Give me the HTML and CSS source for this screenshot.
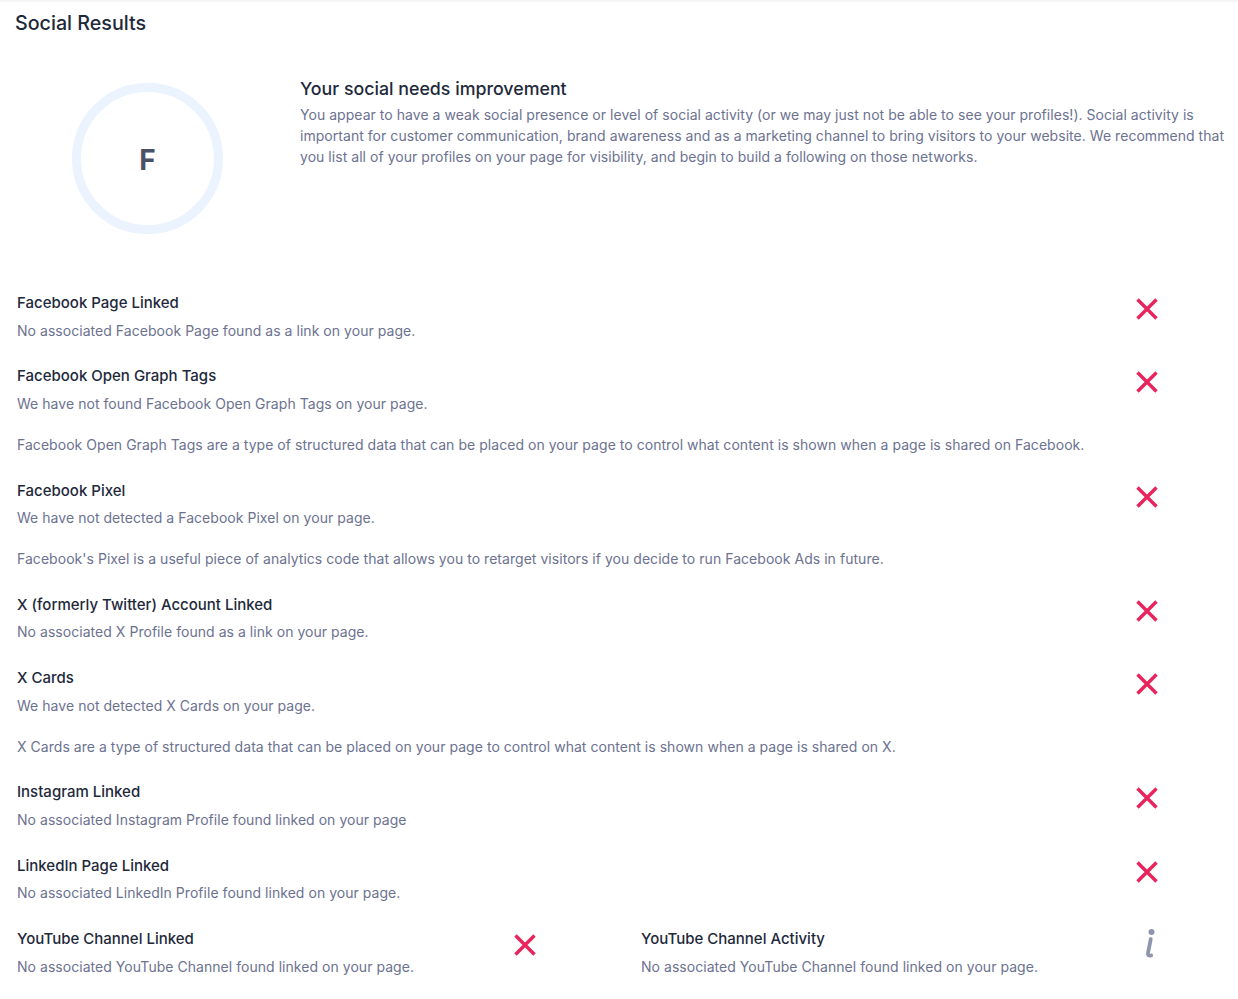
FILE: index.html
```html
<!DOCTYPE html>
<html lang="en">
<head>
<meta charset="utf-8">
<title>Social Results</title>
<link rel="stylesheet" href="styles.css">
</head>
<body>
<div class="page">
  <h2 class="page-title">Social Results</h2>

  <section class="summary">
    <div class="grade-ring"><span class="grade">F</span></div>
    <div class="summary-text">
      <h3 class="summary-heading">Your social needs improvement</h3>
      <p class="summary-body">You appear to have a weak social presence or level of social activity (or we may just not be able to see your profiles!). Social activity is important for customer communication, brand awareness and as a marketing channel to bring visitors to your website. We recommend that you list all of your profiles on your page for visibility, and begin to build a following on those networks.</p>
    </div>
  </section>

  <div class="checks">
    <div class="check">
      <div class="check-main">
        <div class="check-title">Facebook Page Linked</div>
        <div class="check-desc">No associated Facebook Page found as a link on your page.</div>
      </div>
      <div class="check-icon"><svg class="icon-x" viewBox="0 0 24 24"><path d="M2.5 2.5 L21.5 21.5 M21.5 2.5 L2.5 21.5"/></svg></div>
    </div>

    <div class="check">
      <div class="check-main">
        <div class="check-title">Facebook Open Graph Tags</div>
        <div class="check-desc">We have not found Facebook Open Graph Tags on your page.</div>
      </div>
      <div class="check-icon"><svg class="icon-x" viewBox="0 0 24 24"><path d="M2.5 2.5 L21.5 21.5 M21.5 2.5 L2.5 21.5"/></svg></div>
      <p class="check-extra">Facebook Open Graph Tags are a type of structured data that can be placed on your page to control what content is shown when a page is shared on Facebook.</p>
    </div>

    <div class="check">
      <div class="check-main">
        <div class="check-title">Facebook Pixel</div>
        <div class="check-desc">We have not detected a Facebook Pixel on your page.</div>
      </div>
      <div class="check-icon"><svg class="icon-x" viewBox="0 0 24 24"><path d="M2.5 2.5 L21.5 21.5 M21.5 2.5 L2.5 21.5"/></svg></div>
      <p class="check-extra">Facebook's Pixel is a useful piece of analytics code that allows you to retarget visitors if you decide to run Facebook Ads in future.</p>
    </div>

    <div class="check">
      <div class="check-main">
        <div class="check-title">X (formerly Twitter) Account Linked</div>
        <div class="check-desc">No associated X Profile found as a link on your page.</div>
      </div>
      <div class="check-icon"><svg class="icon-x" viewBox="0 0 24 24"><path d="M2.5 2.5 L21.5 21.5 M21.5 2.5 L2.5 21.5"/></svg></div>
    </div>

    <div class="check">
      <div class="check-main">
        <div class="check-title">X Cards</div>
        <div class="check-desc">We have not detected X Cards on your page.</div>
      </div>
      <div class="check-icon"><svg class="icon-x" viewBox="0 0 24 24"><path d="M2.5 2.5 L21.5 21.5 M21.5 2.5 L2.5 21.5"/></svg></div>
      <p class="check-extra">X Cards are a type of structured data that can be placed on your page to control what content is shown when a page is shared on X.</p>
    </div>

    <div class="check">
      <div class="check-main">
        <div class="check-title">Instagram Linked</div>
        <div class="check-desc">No associated Instagram Profile found linked on your page</div>
      </div>
      <div class="check-icon"><svg class="icon-x" viewBox="0 0 24 24"><path d="M2.5 2.5 L21.5 21.5 M21.5 2.5 L2.5 21.5"/></svg></div>
    </div>

    <div class="check">
      <div class="check-main">
        <div class="check-title">LinkedIn Page Linked</div>
        <div class="check-desc">No associated LinkedIn Profile found linked on your page.</div>
      </div>
      <div class="check-icon"><svg class="icon-x" viewBox="0 0 24 24"><path d="M2.5 2.5 L21.5 21.5 M21.5 2.5 L2.5 21.5"/></svg></div>
    </div>

    <div class="check-pair">
      <div class="check">
        <div class="check-main">
          <div class="check-title">YouTube Channel Linked</div>
          <div class="check-desc">No associated YouTube Channel found linked on your page.</div>
        </div>
        <div class="check-icon"><svg class="icon-x" viewBox="0 0 24 24"><path d="M2.5 2.5 L21.5 21.5 M21.5 2.5 L2.5 21.5"/></svg></div>
      </div>
      <div class="check">
        <div class="check-main">
          <div class="check-title">YouTube Channel Activity</div>
          <div class="check-desc">No associated YouTube Channel found linked on your page.</div>
        </div>
        <div class="check-icon"><svg class="icon-info" viewBox="0 0 24 32"><circle cx="14.5" cy="4" r="3"/><path d="M13.8 11 L11 25 Q10.4 28.5 14.2 27.5"/></svg></div>
      </div>
    </div>
  </div>
</div>
</body>
</html>
```

FILE: styles.css
```css
* { box-sizing: border-box; }

html, body {
  margin: 0;
  padding: 0;
  background: #ffffff;
}

body {
  font-family: Inter, "Noto Sans", "Liberation Sans", sans-serif;
  color: #1e293b;
  border-top: 2px solid #f5f6f8;
}

.page {
  padding: 0 4px 40px 15px;
}

.page-title {
  margin: 7px 0 0 0;
  font-size: 19.7px;
  line-height: 28px;
  font-weight: 500;
  color: #1e293b;
}

.summary {
  display: flex;
  align-items: flex-start;
  margin-top: 40px;
}

.grade-ring {
  flex: 0 0 auto;
  width: 151px;
  height: 151px;
  margin-top: 6px;
  margin-left: 57px;
  border-radius: 50%;
  border: 9px solid #ebf3fe;
  display: flex;
  align-items: center;
  justify-content: center;
}

.grade {
  font-size: 28px;
  font-weight: 700;
  color: #4b5268;
  line-height: 1;
  margin-top: 3px;
}

.summary-text {
  margin-left: 77px;
  flex: 1 1 auto;
}

.summary-heading {
  margin: 0;
  font-size: 17.8px;
  line-height: 24px;
  font-weight: 500;
  color: #1e293b;
}

.summary-body {
  margin: 3px 0 0 0;
  font-size: 14px;
  line-height: 21px;
  letter-spacing: 0.04px;
  color: #6c7290;
}

.checks {
  margin-top: 58px;
  margin-left: 2px;
  width: 1204px;
  display: flex;
  flex-direction: column;
  gap: 24.8px;
}

.check {
  display: grid;
  grid-template-columns: 1fr 148px;
  align-items: start;
}

.check-title {
  font-size: 15px;
  line-height: 22px;
  font-weight: 500;
  color: #1e293b;
}

.check-desc {
  margin-top: 6.5px;
  font-size: 14px;
  line-height: 20px;
  letter-spacing: 0.04px;
  color: #6c7290;
}

.check-extra {
  grid-column: 1 / -1;
  margin: 21px 0 0 0;
  font-size: 14px;
  line-height: 20px;
  letter-spacing: 0.04px;
  color: #6c7290;
}

.check-icon {
  display: flex;
  justify-content: center;
  padding-top: 5px;
}

.icon-x {
  width: 24px;
  height: 24px;
  fill: none;
  stroke: #e9235b;
  stroke-width: 3.4;
}

.icon-info {
  width: 24px;
  height: 32px;
  margin-top: -5px;
  fill: #8e96ad;
}

.icon-info path {
  fill: none;
  stroke: #8e96ad;
  stroke-width: 3.8;
  stroke-linecap: round;
}

.check-pair {
  display: grid;
  grid-template-columns: 582px 582px;
  column-gap: 42px;
}
```
